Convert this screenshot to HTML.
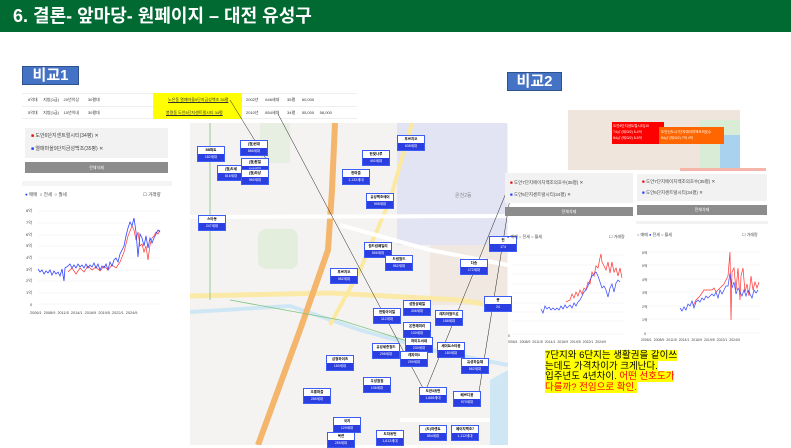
<!DOCTYPE html>
<html><head><meta charset="utf-8"><style>
*{margin:0;padding:0;box-sizing:border-box}
body{width:791px;height:445px;overflow:hidden;background:#fff;position:relative;font-family:"Liberation Sans","Noto Sans CJK KR",sans-serif}
.abs{position:absolute}
.hdr{left:0;top:0;width:791px;height:32px;background:#006a32;color:#fff;font-weight:bold;font-size:18px;line-height:32px;padding-left:13px}
.badge{background:#4472c4;border:1px solid #2f528f;color:#fff;font-weight:bold;font-size:15px;text-align:center}
.t{font-size:4px;color:#333;white-space:nowrap}
.panel{background:#f2f2f2}
.btn{background:#8c8c8c;color:#fff;font-size:4px;text-align:center}
.lg{font-size:5px;color:#444;white-space:nowrap}
.mk{position:absolute;width:28px;font-size:3.5px;text-align:center;line-height:7px;border:1px solid #3d5bf5;background:#fff;color:#000;font-weight:bold}
.mk b{display:block;background:#2b3ee0;color:#fff;font-weight:normal}
</style></head><body>
<div class="abs hdr">6. 결론- 앞마당- 원페이지 – 대전 유성구</div>

<div class="abs badge" style="left:22px;top:66px;width:57px;height:19px;line-height:17px">비교1</div>
<div class="abs badge" style="left:507px;top:72px;width:55px;height:19px;line-height:17px">비교2</div>

<div class="abs" style="left:22px;top:93px;width:335px;height:26px;border-top:1px solid #eee;border-bottom:1px solid #eee"></div>
<div class="abs" style="left:22px;top:106px;width:335px;height:1px;background:#eee"></div>
<div class="abs" style="left:153px;top:93px;width:89px;height:26px;background:#ffff00"></div>
<div class="abs t" style="left:28px;top:97px">6억대 &nbsp;&nbsp;&nbsp; 지방(1급) &nbsp;&nbsp; 20년이상 &nbsp;&nbsp;&nbsp;&nbsp;&nbsp;&nbsp; 30평대</div>
<div class="abs t" style="left:28px;top:110px">5억대 &nbsp;&nbsp;&nbsp; 지방(1급) &nbsp;&nbsp; 10년이내 &nbsp;&nbsp;&nbsp;&nbsp;&nbsp;&nbsp; 30평대</div>
<div class="abs t" style="left:168px;top:97px;text-decoration:underline">노은동 열매마을9단지금성백조 35평</div>
<div class="abs t" style="left:166px;top:110px;text-decoration:underline">봉명동 도안6단지센트럴시티 34평</div>
<div class="abs t" style="left:246px;top:97px">2002년 &nbsp;&nbsp;&nbsp;&nbsp; 646세대 &nbsp;&nbsp;&nbsp;&nbsp;&nbsp; 35평 &nbsp;&nbsp;&nbsp;&nbsp; 60,000</div>
<div class="abs t" style="left:246px;top:110px">2010년 &nbsp;&nbsp;&nbsp;&nbsp; 854세대 &nbsp;&nbsp;&nbsp;&nbsp;&nbsp; 34평 &nbsp;&nbsp;&nbsp;&nbsp; 55,000 &nbsp;&nbsp;&nbsp; 58,000</div>

<div class="abs panel" style="left:25px;top:128px;width:143px;height:30px"></div>
<div class="abs lg" style="left:31px;top:132px"><span style="color:#e00">■</span> 도안6단지센트럴시티(34평) ✕</div>
<div class="abs lg" style="left:31px;top:145px"><span style="color:#1a3cff">■</span> 열매마을9단지금성백조(35평) ✕</div>
<div class="abs btn" style="left:25px;top:162px;width:143px;height:11px;line-height:11px">전체삭제</div>
<div class="abs" style="left:22px;top:181px;width:150px;height:5px;background:#f4f4f4"></div>
<div class="abs lg" style="left:25px;top:192px;font-size:4.5px"><span style="color:#1a3cff">●</span> 매매 &nbsp;○ 전세 &nbsp;○ 월세</div>
<div class="abs lg" style="left:143px;top:192px;font-size:4.5px">☐ 거래량</div>

<svg class="abs" style="left:0;top:0" width="791" height="445">
<g font-size="4" fill="#444" font-family="Liberation Sans, Noto Sans CJK KR, sans-serif">
<g stroke="#eee" stroke-width="0.5">
<line x1="38" y1="211" x2="160" y2="211"/><line x1="38" y1="223" x2="160" y2="223"/><line x1="38" y1="235" x2="160" y2="235"/><line x1="38" y1="246" x2="160" y2="246"/><line x1="38" y1="258" x2="160" y2="258"/><line x1="38" y1="270" x2="160" y2="270"/><line x1="38" y1="281" x2="160" y2="281"/><line x1="38" y1="293" x2="160" y2="293"/><line x1="38" y1="304" x2="160" y2="304"/>
</g>
<text x="26" y="212">8억</text><text x="26" y="224">7억</text><text x="26" y="236">6억</text><text x="26" y="247">5억</text><text x="26" y="259">4억</text><text x="26" y="271">3억</text><text x="26" y="282">2억</text><text x="26" y="294">1억</text><text x="30" y="306">0</text>
<text x="30" y="314" font-size="3.8">2006/1 &#160;2008/9 &#160;2011/5 &#160;2014/1 &#160;2016/9 &#160;2019/5 &#160;2022/1 &#160;2024/9</text>
<polyline fill="none" stroke="#ff3333" stroke-width="0.7" points="68,272 72,268 76,274 80,268 84,272 88,266 92,270 96,267 100,271 104,266 108,270 112,265 116,268 120,262 124,252 126,244 128,236 130,231 132,226 134,230 136,240 138,232 140,246 142,244 144,252 146,246 148,260 150,245 152,238 154,236 156,232 158,234 160,230"/>
<polyline fill="none" stroke="#3344ff" stroke-width="0.8" points="38,269 40,272 42,270 44,274 46,271 48,273 50,270 52,275 54,271 56,274 58,272 60,276 62,269 64,281 65,268 68,266 70,264 72,268 74,265 76,268 78,264 80,267 82,265 84,268 86,264 88,268 90,265 92,267 94,263 96,268 98,264 100,270 102,266 104,268 106,264 108,270 110,262 112,266 114,260 116,258 118,262 120,254 122,250 124,246 126,236 128,228 130,222 132,226 134,218 136,232 138,257 140,234 142,238 144,246 146,236 148,248 150,238 152,243 154,238 156,234 158,230 160,232"/>

<g stroke="#eee" stroke-width="0.5">
<line x1="512" y1="255" x2="625" y2="255"/><line x1="512" y1="265" x2="625" y2="265"/><line x1="512" y1="274" x2="625" y2="274"/><line x1="512" y1="284" x2="625" y2="284"/><line x1="512" y1="293" x2="625" y2="293"/><line x1="512" y1="303" x2="625" y2="303"/><line x1="512" y1="312" x2="625" y2="312"/><line x1="512" y1="321" x2="625" y2="321"/><line x1="512" y1="334" x2="625" y2="334"/>
</g>
<text x="508" y="337" font-size="3.6">0</text>
<text x="507" y="343" font-size="3.5">2006/1 &#160;2008/9 &#160;2011/5 &#160;2014/1 &#160;2016/9 &#160;2019/5 &#160;2022/1 &#160;2024/9</text>
<polyline fill="none" stroke="#ff3333" stroke-width="0.7" points="566,302 570,300 572,294 574,298 576,292 578,296 580,290 582,294 584,288 586,290 588,282 590,284 592,272 594,276 596,266 598,268 600,258 601,254 602,262 604,266 606,270 608,262 610,273 612,262 614,272 616,268 618,276 620,268 622,278"/>
<polyline fill="none" stroke="#3344ff" stroke-width="0.7" points="541,309 543,313 545,306 547,309 549,307 551,310 553,308 555,310 557,308 559,310 561,306 563,309 565,305 567,308 570,305 572,308 574,303 576,306 578,302 580,300 582,296 584,292 586,290 588,286 590,280 592,276 594,274 596,272 598,276 600,282 602,288 604,286 606,290 608,297 610,288 612,284 614,292 616,283 618,280 620,282"/>

<g stroke="#eee" stroke-width="0.5">
<line x1="645" y1="252" x2="760" y2="252"/><line x1="645" y1="265" x2="760" y2="265"/><line x1="645" y1="279" x2="760" y2="279"/><line x1="645" y1="292" x2="760" y2="292"/><line x1="645" y1="306" x2="760" y2="306"/><line x1="645" y1="319" x2="760" y2="319"/><line x1="645" y1="333" x2="760" y2="333"/>
</g>
<text x="642" y="254" font-size="3.6">6억</text><text x="642" y="267" font-size="3.6">5억</text><text x="642" y="281" font-size="3.6">4억</text><text x="642" y="294" font-size="3.6">3억</text><text x="642" y="308" font-size="3.6">2억</text><text x="642" y="321" font-size="3.6">1억</text><text x="644" y="335" font-size="3.6">0</text>
<text x="641" y="341" font-size="3.5">2006/1 &#160;2008/9 &#160;2011/5 &#160;2014/1 &#160;2016/9 &#160;2019/5 &#160;2022/1 &#160;2024/9</text>
<polyline fill="none" stroke="#ff3333" stroke-width="0.7" points="693,306 696,300 700,296 704,290 708,290 712,290 714,288 716,292 718,290 720,288 722,286 724,284 726,280 728,276 730,252 731,320 732,272 734,268 736,290 738,268 740,300 741,276 743,268 745,292 747,284 749,296 751,276 753,290 755,282 757,288 759,282"/>
<polyline fill="none" stroke="#3344ff" stroke-width="0.7" points="680,308 682,311 684,307 686,310 688,304 690,306 692,301 694,308 696,302 698,300 700,302 702,298 704,300 706,296 708,298 710,296 712,294 714,296 716,292 718,298 720,290 722,294 724,290 726,286 728,286 730,273 732,288 734,282 736,294 738,288 740,292 742,296 744,290 746,296 748,290 750,294 752,298 754,290 756,293 758,290"/>
</g>

<rect x="190" y="123" width="318" height="322" fill="#f4f3f1"/>
<rect x="397" y="123" width="110" height="122" fill="#e3e4f3"/>
<rect x="430" y="245" width="77" height="60" fill="#f1e9e1"/>
<rect x="258" y="229" width="40" height="40" fill="#e4eedd" rx="8"/>
<rect x="260" y="123" width="30" height="40" fill="#e7efe2"/>
<path d="M190,296 L330,293 L460,300 L508,308" stroke="#fbe9a8" stroke-width="5" fill="none"/>
<path d="M190,312 L290,306 L360,330 L440,352 L508,365" stroke="#cfe7f5" stroke-width="4" fill="none"/>
<path d="M412,123 L390,200 L360,270 L330,325" stroke="#fce9a0" stroke-width="4" fill="none"/>
<path d="M335,123 L332,190 L328,250 L300,330 L258,445" stroke="#f4b56c" stroke-width="6" fill="none"/>
<path d="M190,217 L508,216" stroke="#fff" stroke-width="4" fill="none"/>
<path d="M340,225 L430,250 L508,265" stroke="#fff" stroke-width="4" fill="none"/>
<path d="M400,420 L508,420" stroke="#fff" stroke-width="4" fill="none"/>
<path d="M210,123 L210,300" stroke="#7cc47c" stroke-width="0.8" fill="none"/>
<path d="M230,300 L340,320 L420,345" stroke="#7cc47c" stroke-width="0.8" fill="none"/>
<path d="M490,380 L508,370 L508,445 L490,445 Z" fill="#cfe7f5"/>
<g stroke="#222" stroke-width="0.5" fill="none">
<line x1="230" y1="100" x2="268" y2="162"/>
<line x1="278" y1="114" x2="425" y2="392"/>
<line x1="508" y1="188" x2="425" y2="392"/>
<line x1="510" y1="198" x2="478" y2="398"/>
</g>
<text x="455" y="197" font-size="5" fill="#888" font-family="Liberation Sans, Noto Sans CJK KR, sans-serif">온천2동</text>
</svg>

<div class="mk" style="left:197px;top:146px">5B퍼트<b>182세대</b></div>
<div class="mk" style="left:240px;top:140px">(월)현대<b>886세대</b></div>
<div class="mk" style="left:217px;top:165px">(월)도세<b>816세대</b></div>
<div class="mk" style="left:241px;top:158px">(월)팜빌<b>646세대</b></div>
<div class="mk" style="left:241px;top:169px">(월)하상<b>960세대</b></div>
<div class="mk" style="left:397px;top:135px">푸르지오<b>638세대</b></div>
<div class="mk" style="left:362px;top:150px">한빛나루<b>492세대</b></div>
<div class="mk" style="left:342px;top:169px">한마을<b>1,132세대</b></div>
<div class="mk" style="left:366px;top:193px">유성백조메이<b>998세대</b></div>
<div class="mk" style="left:198px;top:215px">스타동<b>247세대</b></div>
<div class="mk" style="left:364px;top:242px">월드컵패밀리<b>556세대</b></div>
<div class="mk" style="left:385px;top:255px">드림월드<b>552세대</b></div>
<div class="mk" style="left:460px;top:259px">다솜<b>172세대</b></div>
<div class="mk" style="left:330px;top:268px">푸르지오<b>982세대</b></div>
<div class="mk" style="left:403px;top:300px">성원상떼빌<b>336세대</b></div>
<div class="mk" style="left:373px;top:308px">한빛아이빌<b>112세대</b></div>
<div class="mk" style="left:435px;top:310px">레지아월드로<b>158세대</b></div>
<div class="mk" style="left:403px;top:322px">온천해미리<b>130세대</b></div>
<div class="mk" style="left:405px;top:337px">하이두씨네<b>230세대</b></div>
<div class="mk" style="left:437px;top:342px">세이트스타움<b>180세대</b></div>
<div class="mk" style="left:372px;top:343px">유성세종월드<b>298세대</b></div>
<div class="mk" style="left:400px;top:351px">레자미3<b>299세대</b></div>
<div class="mk" style="left:326px;top:355px">삼정하이츠<b>150세대</b></div>
<div class="mk" style="left:461px;top:358px">유성하늘채<b>562세대</b></div>
<div class="mk" style="left:363px;top:377px">우성월월<b>136세대</b></div>
<div class="mk" style="left:303px;top:388px">초롱마을<b>285세대</b></div>
<div class="mk" style="left:419px;top:387px">도안3휴먼<b>1,666세대</b></div>
<div class="mk" style="left:453px;top:391px">베르디움<b>970세대</b></div>
<div class="mk" style="left:333px;top:417px">국지<b>129세대</b></div>
<div class="mk" style="left:327px;top:432px">목련<b>255세대</b></div>
<div class="mk" style="left:376px;top:430px">도자휴먼<b>1,612세대</b></div>
<div class="mk" style="left:419px;top:425px">(도)하센트<b>854세대</b></div>
<div class="mk" style="left:451px;top:425px">에이치백조7<b>1,112세대</b></div>
<div class="mk" style="left:489px;top:236px">진<b>174</b></div>
<div class="mk" style="left:484px;top:296px">봉<b>24</b></div>

<div class="abs" style="left:568px;top:110px;width:172px;height:60px;background:#efe5dc"></div>
<div class="abs" style="left:700px;top:120px;width:40px;height:50px;background:#d9ecd6"></div>
<div class="abs" style="left:720px;top:135px;width:20px;height:35px;background:#a9d2ef"></div>
<div class="abs" style="left:680px;top:168px;width:86px;height:3px;background:#f5b5a8"></div>
<div class="abs" style="left:612px;top:122px;width:52px;height:22px;background:#f00;color:#fff;font-size:3.5px;line-height:6px;padding:1px">도안6단지센트럴시티(10<br>74㎡ (매/3/2) 5.4억<br>84㎡ (매/3/2) 5.5억</div>
<div class="abs" style="left:659px;top:127px;width:65px;height:17px;background:#ff6600;color:#fff;font-size:3.5px;line-height:6px;padding:2px">도안신도시7단지에이치백조의호수<br>84㎡ (매/3/2) 7억 4억</div>

<div class="abs panel" style="left:505px;top:173px;width:128px;height:30px"></div>
<div class="abs lg" style="left:510px;top:180px;font-size:4.5px"><span style="color:#e00">■</span> 도안7단지에이치백조의호수(35평) ✕</div>
<div class="abs lg" style="left:510px;top:192px;font-size:4.5px"><span style="color:#1a3cff">■</span> 도안6단지센트럴시티(34평) ✕</div>
<div class="abs btn" style="left:505px;top:207px;width:128px;height:9px;line-height:9px">전체삭제</div>
<div class="abs panel" style="left:637px;top:174px;width:130px;height:27px"></div>
<div class="abs lg" style="left:642px;top:179px;font-size:4.5px"><span style="color:#e00">■</span> 도안7단지에이치백조의호수(35평) ✕</div>
<div class="abs lg" style="left:642px;top:190px;font-size:4.5px"><span style="color:#1a3cff">■</span> 도안6단지센트럴시티(34평) ✕</div>
<div class="abs btn" style="left:637px;top:205px;width:130px;height:10px;line-height:10px">전체삭제</div>
<div class="abs" style="left:636px;top:221px;width:132px;height:3px;background:#f2f2f2"></div>
<div class="abs lg" style="left:507px;top:234px;font-size:4px"><span style="color:#1a3cff">●</span> 매매 ○ 전세 ○ 월세</div>
<div class="abs lg" style="left:609px;top:234px;font-size:4px">☐ 거래량</div>
<div class="abs lg" style="left:637px;top:232px;font-size:4px">○ 매매 <span style="color:#1a3cff">●</span> 전세 ○ 월세</div>
<div class="abs lg" style="left:742px;top:232px;font-size:4px">☐ 거래량</div>

<div class="abs" style="left:545px;top:351px;width:140px;font-size:9.5px;line-height:10.7px;color:#000;white-space:nowrap">
<span style="background:#ffff00">7단지와 6단지는 생활권을 같이쓰</span><br><span style="background:#ffff00">는데도 가격차이가 크게난다.</span><br><span style="background:#ffff00">입주년도 4년차이. <span style="color:#f00">어떤 선호도가</span></span><br><span style="background:#ffff00;color:#f00">다를까? 전임으로 확인.</span></div>
</body></html>
